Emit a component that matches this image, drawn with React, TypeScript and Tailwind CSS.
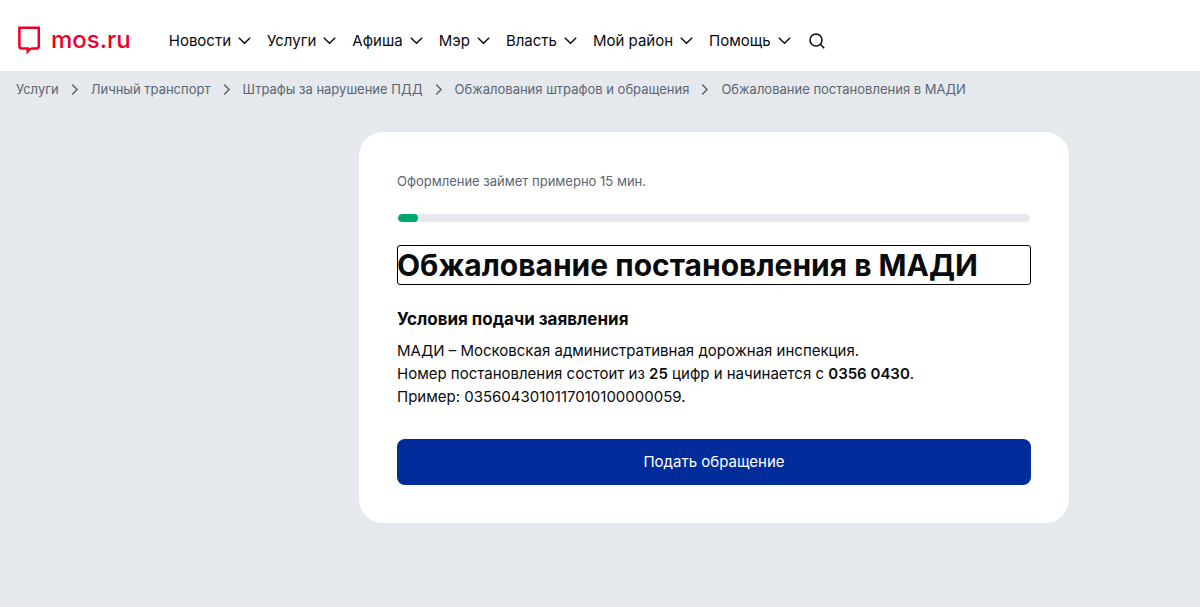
import { Fragment } from "react";

const navItems = ["Новости", "Услуги", "Афиша", "Мэр", "Власть", "Мой район", "Помощь"];

const crumbs = [
  "Услуги",
  "Личный транспорт",
  "Штрафы за нарушение ПДД",
  "Обжалования штрафов и обращения",
  "Обжалование постановления в МАДИ",
];

function LogoMark() {
  return (
    <svg className="h-7 w-6 shrink-0" viewBox="0 0 24 28" fill="none" stroke="#eb0028" strokeWidth="2.5" aria-hidden="true">
      <path d="M2.4 1.8H21.8V20Q21.8 22.6 19.2 22.6H15Q13.4 22.6 10.7 25.4V22.6H5Q2.4 22.6 2.4 20Z" />
    </svg>
  );
}

function ChevronDown() {
  return (
    <svg className="h-2 w-[13px] shrink-0" viewBox="0 0 13 8" fill="none" stroke="currentColor" strokeWidth="1.4" aria-hidden="true">
      <path d="M0.8 0.7L6.5 6.3L12.2 0.7" />
    </svg>
  );
}

function ChevronRight() {
  return (
    <svg className="h-3 w-2 shrink-0" viewBox="0 0 8 12" fill="none" stroke="currentColor" strokeWidth="1.5" aria-hidden="true">
      <path d="M1.2 1.6L6 6.5L1.2 11.4" />
    </svg>
  );
}

function SearchIcon() {
  return (
    <svg className="size-4" viewBox="0 0 16 16" fill="none" stroke="currentColor" strokeWidth="1.5" aria-hidden="true">
      <circle cx="7" cy="7" r="6" />
      <path d="M11.3 11.3L15.2 15.2" />
    </svg>
  );
}

export default function App() {
  return (
    <div className="min-h-screen bg-[#e5e9ed] font-['Inter','Noto_Sans',sans-serif] text-[#0a0b0d]">
      <header className="flex items-center gap-[38px] bg-white px-[17px] pt-5 pb-[13px]">
        <a href="#" className="flex items-center gap-[10px] pt-[2px] text-[#eb0028]">
          <LogoMark />
          <span className="text-2xl leading-9 font-medium">mos.ru</span>
        </a>
        <nav className="flex items-center gap-4 pt-1">
          {navItems.map((item) => (
            <button key={item} type="button" className="flex items-center gap-[7px] text-[15px] leading-6 whitespace-nowrap">
              {item}
              <ChevronDown />
            </button>
          ))}
          <button type="button" aria-label="Поиск" className="pl-[2px]">
            <SearchIcon />
          </button>
        </nav>
      </header>

      <nav className="flex flex-wrap items-center gap-3 px-4 pt-2 text-[13px] leading-5 text-[#5a6572]">
        {crumbs.map((crumb, index) => (
          <Fragment key={crumb}>
            {index > 0 && <ChevronRight />}
            <a href="#">{crumb}</a>
          </Fragment>
        ))}
      </nav>

      <main className="pt-[33px] pr-[131px] pb-10 pl-[359px]">
        <section className="rounded-3xl bg-white p-[38px]">
          <p className="text-[13px] leading-[22px] text-[#5a6572]">Оформление займет примерно 15 мин.</p>
          <div className="mx-px mt-[22px] h-2 overflow-hidden rounded-full bg-[#e5e9ed]">
            <div className="h-full w-5 rounded-full bg-[#00a870]" />
          </div>
          <h1 className="mt-[23px] rounded-[3px] text-[30px] leading-10 font-bold outline-1 -outline-offset-1 outline-black">
            Обжалование постановления в МАДИ
          </h1>
          <h2 className="mt-[22px] text-[17px] leading-6 font-bold">Условия подачи заявления</h2>
          <p className="mt-2 text-[15px] leading-[23px]">
            МАДИ – Московская административная дорожная инспекция.
            <br />
            Номер постановления состоит из <b className="font-semibold">25</b> цифр и начинается с{" "}
            <b className="font-semibold">0356 0430</b>.
            <br />
            Пример: 0356043010117010100000059.
          </p>
          <button type="button" className="mt-[31px] w-full rounded-lg bg-[#002b9b] py-[11px] text-[15px] leading-6 text-white">
            Подать обращение
          </button>
        </section>
      </main>
    </div>
  );
}
